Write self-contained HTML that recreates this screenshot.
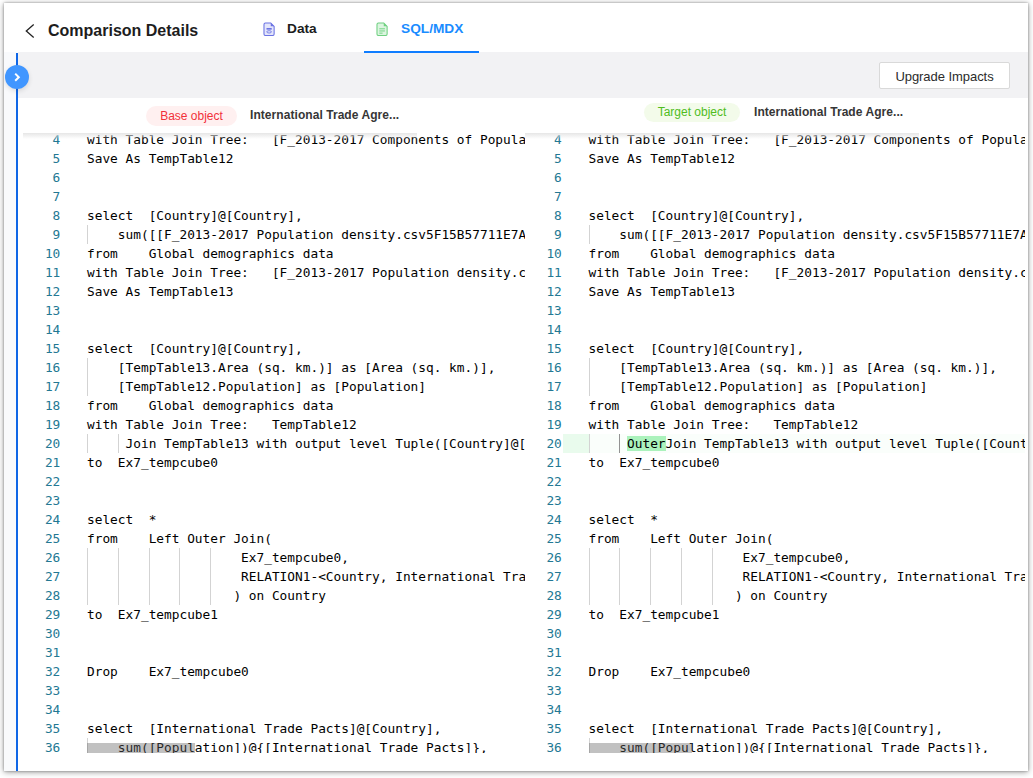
<!DOCTYPE html>
<html lang="en">
<head>
<meta charset="utf-8">
<title>Comparison Details</title>
<style>
*{box-sizing:border-box;margin:0;padding:0}
html,body{width:1033px;height:778px;overflow:hidden;background:#fff}
body{font-family:"Liberation Sans",Arial,sans-serif;position:relative}
#app{position:absolute;left:4px;top:3px;width:1024px;height:768px;background:#fff;box-shadow:0 0 2px rgba(0,0,0,.3),0 .5px 6px rgba(0,0,0,.42);overflow:hidden}
.header{position:absolute;left:0;top:0;width:1024px;height:49px;background:#fff}
.back{position:absolute;left:20px;top:21px;width:12px;height:15px}
.title{position:absolute;left:44px;top:18px;font-size:16px;line-height:20px;font-weight:bold;color:#1d1d1d;white-space:nowrap}
.tab{position:absolute;top:0;height:49px;font-size:13.7px;font-weight:bold;color:#1d1d1d;white-space:nowrap}
.tab svg{position:absolute;top:18.5px;width:12.6px;height:14.5px}
.tab span{position:absolute;top:15.7px;line-height:20px}
.tab.active span{color:#1a8cff}
.ink{position:absolute;left:360px;top:48px;width:115px;height:2px;background:#0f7dff;z-index:3}
.band{position:absolute;left:14px;top:49px;width:1010px;height:46px;background:#f2f2f4}
.gutter{position:absolute;left:0;top:49px;width:12px;height:719px;background:#f9fafc}
.vline{position:absolute;left:12px;top:50px;width:2px;height:718px;background:#0f66e6}
.circle{position:absolute;left:1px;top:62px;width:24px;height:24px;border-radius:50%;background:#4096ff;box-shadow:0 2px 5px rgba(0,0,0,.12);z-index:4}
.circle svg{position:absolute;left:0;top:0;width:24px;height:24px}
.btn{position:absolute;width:131px;height:27px;background:#fff;border:1px solid #d9d9d9;border-radius:2px;font-size:13px;line-height:27px;text-align:center;color:#2b2b2b;letter-spacing:-0.05px}
.pill{position:absolute;height:20px;border-radius:10px;font-size:12px;line-height:20px;text-align:center;white-space:nowrap}
.pill.base{left:142px;top:103px;width:91px;background:#fff0f0;color:#f2303a}
.pill.target{left:640px;top:100px;width:96px;height:19px;line-height:19px;background:#f3fbea;color:#4fbd1d}
.oname{position:absolute;font-size:12px;font-weight:bold;line-height:16px;color:#363636;white-space:nowrap;letter-spacing:.06px}
.oname.l{left:246px;top:104px}
.oname.r{left:750px;top:101px}
.editor{position:absolute;top:130px;height:620px;overflow:hidden;background:#fff}
.editor.left{left:19px;width:501.5px}
.editor.right{left:520.5px;width:500.5px}
.lines{position:absolute;left:0;top:-3px;width:1200px}
.ln{position:relative;height:19px;line-height:19px;white-space:pre;font-family:"DejaVu Sans Mono","Liberation Mono",monospace;font-size:12.8px;letter-spacing:0;color:#000}
.no{position:absolute;left:0;top:0;width:37.3px;text-align:right;color:#237893}
.tx{position:absolute;left:64px;top:0}
.ig{position:absolute;top:0;width:1px;height:19px;background:#d3d3d3}
.ig.act{background:#939393}
.ln.ins{background:linear-gradient(90deg,rgba(0,0,0,0) 0,rgba(0,0,0,0) 38px,#e9fbed 38px,#e9fbed 64px,#fafefb 64px)}
.ci{background:#abf2bc}
.shadow{position:absolute;left:0;top:0;width:394px;height:6px;background:linear-gradient(#e6e6e6,rgba(255,255,255,0))}
.slider{position:absolute;left:64px;top:610px;height:10px;background:rgba(100,100,100,.4)}
.left .slider{width:108px}
.right .slider{width:103px}

</style>
</head>
<body>
<div id="app">
  <div class="header">
    <svg class="back" viewBox="0 0 12 15"><path d="M9.7 0.6 L2.3 7 L9.7 13.4" fill="none" stroke="#222" stroke-width="1.3"/></svg>
    <div class="title">Comparison Details</div>
    <div class="tab" style="left:256px;width:70px">
      <svg style="left:2.5px" viewBox="0 0 13 15"><path d="M2.5 1 H8 L11.5 4.5 V12.5 Q11.5 14 10 14 H2.5 Q1 14 1 12.5 V2.5 Q1 1 2.5 1 Z" fill="#e4e6fb" stroke="#6b73e3" stroke-width="1.1"/><path d="M8 1 V4.5 H11.5 Z" fill="#6b73e3"/><rect x="3.6" y="6.2" width="5.4" height="1.7" fill="#6b73e3"/><ellipse cx="6.3" cy="10.2" rx="2.4" ry="1.2" fill="none" stroke="#6b73e3" stroke-width="0.9"/></svg>
      <span style="left:27px">Data</span>
    </div>
    <div class="tab active" style="left:360px;width:115px">
      <svg style="left:11.5px" viewBox="0 0 13 15"><path d="M2.5 1 H8 L11.5 4.5 V12.5 Q11.5 14 10 14 H2.5 Q1 14 1 12.5 V2.5 Q1 1 2.5 1 Z" fill="#dcf5e0" stroke="#6fd081" stroke-width="1.1"/><path d="M8 1 V4.5 H11.5 Z" fill="#6fd081"/><rect x="3.4" y="6.3" width="5.8" height="1.3" fill="#8bdb99"/><rect x="3.4" y="8.6" width="5.8" height="1.3" fill="#8bdb99"/><rect x="3.4" y="10.9" width="3.4" height="1.3" fill="#8bdb99"/></svg>
      <span style="left:37px">SQL/MDX</span>
    </div>
  </div>
  <div class="gutter"></div>
  <div class="band"><div class="btn" style="left:861px;top:10px">Upgrade Impacts</div></div>
  <div class="ink"></div>
  <div class="vline"></div>
  <div class="circle"><svg viewBox="0 0 24 24"><path d="M10.2 8.6 L13.8 12.2 L10.2 15.8" fill="none" stroke="#fff" stroke-width="2"/></svg></div>
  <div class="pill base">Base object</div>
  <div class="oname l">International Trade Agre...</div>
  <div class="pill target">Target object</div>
  <div class="oname r">International Trade Agre...</div>
<div class="editor left">
<div class="lines">
<div class="ln"><span class="no">4</span><span class="tx">with Table Join Tree:   [F_2013-2017 Components of Population change.csv]</span></div>
<div class="ln"><span class="no">5</span><span class="tx">Save As TempTable12</span></div>
<div class="ln"><span class="no">6</span><span class="tx"></span></div>
<div class="ln"><span class="no">7</span><span class="tx"></span></div>
<div class="ln"><span class="no">8</span><span class="tx">select  [Country]@[Country],</span></div>
<div class="ln"><span class="no">9</span><i class="ig" style="left:64.0px"></i><span class="tx">    sum([[F_2013-2017 Population density.csv5F15B57711E7A2]]) as [Area]</span></div>
<div class="ln"><span class="no">10</span><span class="tx">from    Global demographics data</span></div>
<div class="ln"><span class="no">11</span><span class="tx">with Table Join Tree:   [F_2013-2017 Population density.csv]</span></div>
<div class="ln"><span class="no">12</span><span class="tx">Save As TempTable13</span></div>
<div class="ln"><span class="no">13</span><span class="tx"></span></div>
<div class="ln"><span class="no">14</span><span class="tx"></span></div>
<div class="ln"><span class="no">15</span><span class="tx">select  [Country]@[Country],</span></div>
<div class="ln"><span class="no">16</span><i class="ig" style="left:64.0px"></i><span class="tx">    [TempTable13.Area (sq. km.)] as [Area (sq. km.)],</span></div>
<div class="ln"><span class="no">17</span><i class="ig" style="left:64.0px"></i><span class="tx">    [TempTable12.Population] as [Population]</span></div>
<div class="ln"><span class="no">18</span><span class="tx">from    Global demographics data</span></div>
<div class="ln"><span class="no">19</span><span class="tx">with Table Join Tree:   TempTable12</span></div>
<div class="ln"><span class="no">20</span><i class="ig" style="left:64.0px"></i><i class="ig" style="left:94.8px"></i><span class="tx">     Join TempTable13 with output level Tuple([Country]@[Country])</span></div>
<div class="ln"><span class="no">21</span><span class="tx">to  Ex7_tempcube0</span></div>
<div class="ln"><span class="no">22</span><span class="tx"></span></div>
<div class="ln"><span class="no">23</span><span class="tx"></span></div>
<div class="ln"><span class="no">24</span><span class="tx">select  *</span></div>
<div class="ln"><span class="no">25</span><span class="tx">from    Left Outer Join(</span></div>
<div class="ln"><span class="no">26</span><i class="ig" style="left:64.0px"></i><i class="ig" style="left:94.8px"></i><i class="ig" style="left:125.6px"></i><i class="ig" style="left:156.4px"></i><i class="ig" style="left:187.2px"></i><span class="tx">                    Ex7_tempcube0,</span></div>
<div class="ln"><span class="no">27</span><i class="ig" style="left:64.0px"></i><i class="ig" style="left:94.8px"></i><i class="ig" style="left:125.6px"></i><i class="ig" style="left:156.4px"></i><i class="ig" style="left:187.2px"></i><span class="tx">                    RELATION1-&lt;Country, International Trade Pacts&gt;</span></div>
<div class="ln"><span class="no">28</span><i class="ig" style="left:64.0px"></i><i class="ig" style="left:94.8px"></i><i class="ig" style="left:125.6px"></i><i class="ig" style="left:156.4px"></i><i class="ig" style="left:187.2px"></i><span class="tx">                   ) on Country</span></div>
<div class="ln"><span class="no">29</span><span class="tx">to  Ex7_tempcube1</span></div>
<div class="ln"><span class="no">30</span><span class="tx"></span></div>
<div class="ln"><span class="no">31</span><span class="tx"></span></div>
<div class="ln"><span class="no">32</span><span class="tx">Drop    Ex7_tempcube0</span></div>
<div class="ln"><span class="no">33</span><span class="tx"></span></div>
<div class="ln"><span class="no">34</span><span class="tx"></span></div>
<div class="ln"><span class="no">35</span><span class="tx">select  [International Trade Pacts]@[Country],</span></div>
<div class="ln"><span class="no">36</span><i class="ig" style="left:64.0px"></i><span class="tx">    sum([Population])@{[International Trade Pacts]},</span></div>
</div>
<div class="shadow"></div><div class="slider"></div>
</div>
<div class="editor right">
<div class="lines">
<div class="ln"><span class="no">4</span><span class="tx">with Table Join Tree:   [F_2013-2017 Components of Population change.csv]</span></div>
<div class="ln"><span class="no">5</span><span class="tx">Save As TempTable12</span></div>
<div class="ln"><span class="no">6</span><span class="tx"></span></div>
<div class="ln"><span class="no">7</span><span class="tx"></span></div>
<div class="ln"><span class="no">8</span><span class="tx">select  [Country]@[Country],</span></div>
<div class="ln"><span class="no">9</span><i class="ig" style="left:64.0px"></i><span class="tx">    sum([[F_2013-2017 Population density.csv5F15B57711E7A2]]) as [Area]</span></div>
<div class="ln"><span class="no">10</span><span class="tx">from    Global demographics data</span></div>
<div class="ln"><span class="no">11</span><span class="tx">with Table Join Tree:   [F_2013-2017 Population density.csv]</span></div>
<div class="ln"><span class="no">12</span><span class="tx">Save As TempTable13</span></div>
<div class="ln"><span class="no">13</span><span class="tx"></span></div>
<div class="ln"><span class="no">14</span><span class="tx"></span></div>
<div class="ln"><span class="no">15</span><span class="tx">select  [Country]@[Country],</span></div>
<div class="ln"><span class="no">16</span><i class="ig" style="left:64.0px"></i><span class="tx">    [TempTable13.Area (sq. km.)] as [Area (sq. km.)],</span></div>
<div class="ln"><span class="no">17</span><i class="ig" style="left:64.0px"></i><span class="tx">    [TempTable12.Population] as [Population]</span></div>
<div class="ln"><span class="no">18</span><span class="tx">from    Global demographics data</span></div>
<div class="ln"><span class="no">19</span><span class="tx">with Table Join Tree:   TempTable12</span></div>
<div class="ln ins"><span class="no">20</span><i class="ig" style="left:64.0px"></i><i class="ig act" style="left:94.8px"></i><span class="tx">     <span class="ci">Outer</span>Join TempTable13 with output level Tuple([Country]@[Country])</span></div>
<div class="ln"><span class="no">21</span><span class="tx">to  Ex7_tempcube0</span></div>
<div class="ln"><span class="no">22</span><span class="tx"></span></div>
<div class="ln"><span class="no">23</span><span class="tx"></span></div>
<div class="ln"><span class="no">24</span><span class="tx">select  *</span></div>
<div class="ln"><span class="no">25</span><span class="tx">from    Left Outer Join(</span></div>
<div class="ln"><span class="no">26</span><i class="ig" style="left:64.0px"></i><i class="ig" style="left:94.8px"></i><i class="ig" style="left:125.6px"></i><i class="ig" style="left:156.4px"></i><i class="ig" style="left:187.2px"></i><span class="tx">                    Ex7_tempcube0,</span></div>
<div class="ln"><span class="no">27</span><i class="ig" style="left:64.0px"></i><i class="ig" style="left:94.8px"></i><i class="ig" style="left:125.6px"></i><i class="ig" style="left:156.4px"></i><i class="ig" style="left:187.2px"></i><span class="tx">                    RELATION1-&lt;Country, International Trade Pacts&gt;</span></div>
<div class="ln"><span class="no">28</span><i class="ig" style="left:64.0px"></i><i class="ig" style="left:94.8px"></i><i class="ig" style="left:125.6px"></i><i class="ig" style="left:156.4px"></i><i class="ig" style="left:187.2px"></i><span class="tx">                   ) on Country</span></div>
<div class="ln"><span class="no">29</span><span class="tx">to  Ex7_tempcube1</span></div>
<div class="ln"><span class="no">30</span><span class="tx"></span></div>
<div class="ln"><span class="no">31</span><span class="tx"></span></div>
<div class="ln"><span class="no">32</span><span class="tx">Drop    Ex7_tempcube0</span></div>
<div class="ln"><span class="no">33</span><span class="tx"></span></div>
<div class="ln"><span class="no">34</span><span class="tx"></span></div>
<div class="ln"><span class="no">35</span><span class="tx">select  [International Trade Pacts]@[Country],</span></div>
<div class="ln"><span class="no">36</span><i class="ig" style="left:64.0px"></i><span class="tx">    sum([Population])@{[International Trade Pacts]},</span></div>
</div>
<div class="shadow"></div><div class="slider"></div>
</div>
</div>

</body>
</html>
